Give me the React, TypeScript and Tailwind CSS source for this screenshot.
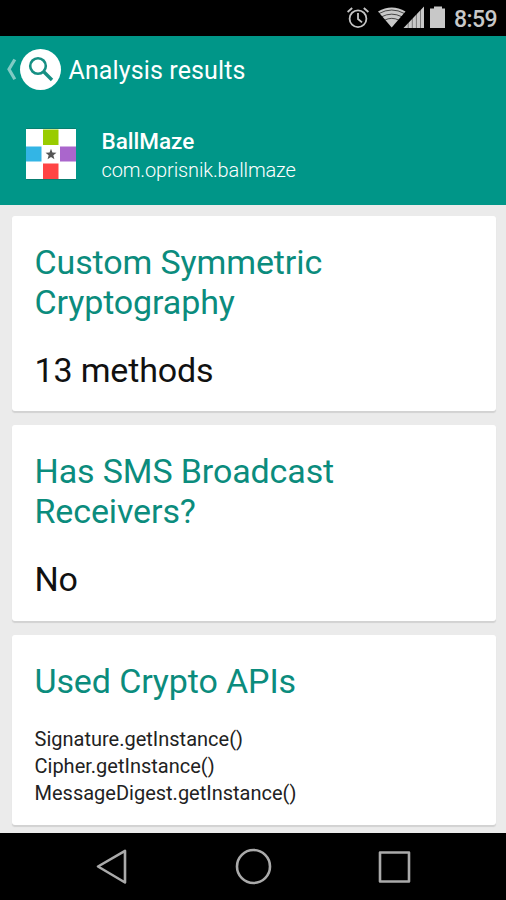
import type { ReactNode } from "react";

function StatusBar() {
  return (
    <div className="flex h-9 shrink-0 items-center bg-black pl-[346px]">
      <svg width="160" height="36" viewBox="346 0 160 36" className="shrink-0" fill="none">
        <g stroke="#c4c4c4" strokeWidth="1.8">
          <circle cx="358" cy="18.7" r="8.4" />
          <path d="M358 13v6l4 3.400M347.600 12l4.600-4M368.400 12l-4.600-4" />
        </g>
        <path d="M378 11.400Q391.700 3.500 405.500 11.400L391.700 27.500Z" fill="#c8c8c8" />
        <g stroke="#000" strokeOpacity="0.65" strokeWidth="1">
          <path d="M379 13.500Q391.700 6.500 404.500 13.500M381.500 16.800Q391.700 11.500 402 16.800M384.500 20.200Q391.700 16.500 399 20.200" />
        </g>
        <path d="M403.500 28L424 6.500V28Z" fill="#c8c8c8" />
        <path d="M408.200 22V28M412.300 18V28M416.400 14V28M420.500 10V28" stroke="#000" strokeOpacity="0.4" strokeWidth="1" />
        <path d="M434 6.500h8V8.500h3V28H430V8.500h4Z" fill="#c8c8c8" />
        <text x="454" y="26.500" fill="#c8c8c8" fontSize="23" fontWeight="500" textLength="43.500" fontFamily="Roboto, sans-serif">8:59</text>
      </svg>
    </div>
  );
}

function AppIcon() {
  return (
    <svg width="52" height="54" viewBox="0 0 52 54" className="shrink-0">
      <rect x="1" y="1" width="50" height="52" rx="1" fill="#087d70" />
      <rect x="1" y="2" width="50" height="50" fill="#fff" />
      <rect x="18" y="2.500" width="15.500" height="15.500" fill="#99cc00" />
      <rect x="1" y="19.500" width="15.500" height="15" fill="#33b5e5" />
      <rect x="35" y="19.500" width="16" height="15" fill="#aa66cc" />
      <rect x="18" y="36.500" width="15.500" height="15.500" fill="#ff4444" />
      <path d="M26 21.700l1.450 3.800 4.050.2-3.150 2.550 1.050 3.950L26 30l-3.400 2.200 1.050-3.950-3.150-2.550 4.050-.2Z" fill="#555" />
    </svg>
  );
}

function Header() {
  return (
    <header className="h-[168.500px] shrink-0 bg-[#009688] text-white">
      <div className="flex h-[68px] items-center pl-[6px]">
        <svg width="56" height="44" viewBox="6 48 56 44" className="shrink-0" fill="none">
          <path d="M14.800 59.500L9 69.300L14.800 79.300" stroke="#80cbc4" strokeWidth="3.200" />
          <circle cx="40.500" cy="69.500" r="20.500" fill="#fff" />
          <circle cx="38" cy="66" r="7.800" stroke="#168f83" strokeWidth="2.600" />
          <path d="M43.500 71.500L52 80" stroke="#168f83" strokeWidth="3.400" />
        </svg>
        <h1 className="ml-[6.500px] mt-[2px] whitespace-nowrap text-[25px] leading-8 tracking-[0.120px]">Analysis results</h1>
      </div>
      <div className="flex items-start pl-[25px] pt-[23px]">
        <AppIcon />
        <div className="ml-[24.500px] whitespace-nowrap">
          <div className="text-[22.500px] font-medium leading-[29px]">BallMaze</div>
          <div className="text-[20px] font-light leading-[28px] tracking-[-0.130px]">com.oprisnik.ballmaze</div>
        </div>
      </div>
    </header>
  );
}

function Card({ title, className, children }: { title: ReactNode; className: string; children: ReactNode }) {
  return (
    <section className={"rounded-[3px] bg-white pl-[23px] pt-[26px] shadow-[0_2px_1px_#d2d2d2] " + className}>
      <h2 className="whitespace-nowrap text-[34px] leading-10 tracking-[-0.120px] text-[#0b8c7d]">{title}</h2>
      {children}
    </section>
  );
}

function NavBar() {
  return (
    <nav className="flex h-[67px] shrink-0 items-center bg-black">
      <svg width="506" height="67" viewBox="0 833 506 67" fill="none" stroke="#aaa" strokeWidth="2.600" strokeLinejoin="round">
        <path d="M98 866.500L125 850.800V882.500Z" />
        <circle cx="253.500" cy="866.500" r="16.500" />
        <rect x="380" y="852.500" width="29" height="29" />
      </svg>
    </nav>
  );
}

export default function App() {
  return (
    <div className="flex h-[900px] w-[506px] flex-col overflow-hidden bg-[#ebebeb] font-[Roboto,sans-serif]">
      <StatusBar />
      <Header />
      <main className="flex h-[628.500px] shrink-0 flex-col gap-[14px] pl-[11.500px] pr-[10.500px] pt-[11px]">
        <Card className="h-[195.500px]" title={<>Custom Symmetric<br />Cryptography</>}>
          <p className="mt-[28px] text-[34px] leading-10 tracking-[-0.150px] text-[#111]">13 methods</p>
        </Card>
        <Card className="h-[195.500px]" title={<>Has SMS Broadcast<br />Receivers?</>}>
          <p className="mt-[28px] text-[34px] leading-10 tracking-[-0.150px] text-[#111]">No</p>
        </Card>
        <Card className="h-[190px]" title="Used Crypto APIs">
          <div className="mt-[25.500px] text-[20px] leading-[27px] text-[#222]">
            <p>Signature.getInstance()</p>
            <p>Cipher.getInstance()</p>
            <p>MessageDigest.getInstance()</p>
          </div>
        </Card>
      </main>
      <NavBar />
    </div>
  );
}
